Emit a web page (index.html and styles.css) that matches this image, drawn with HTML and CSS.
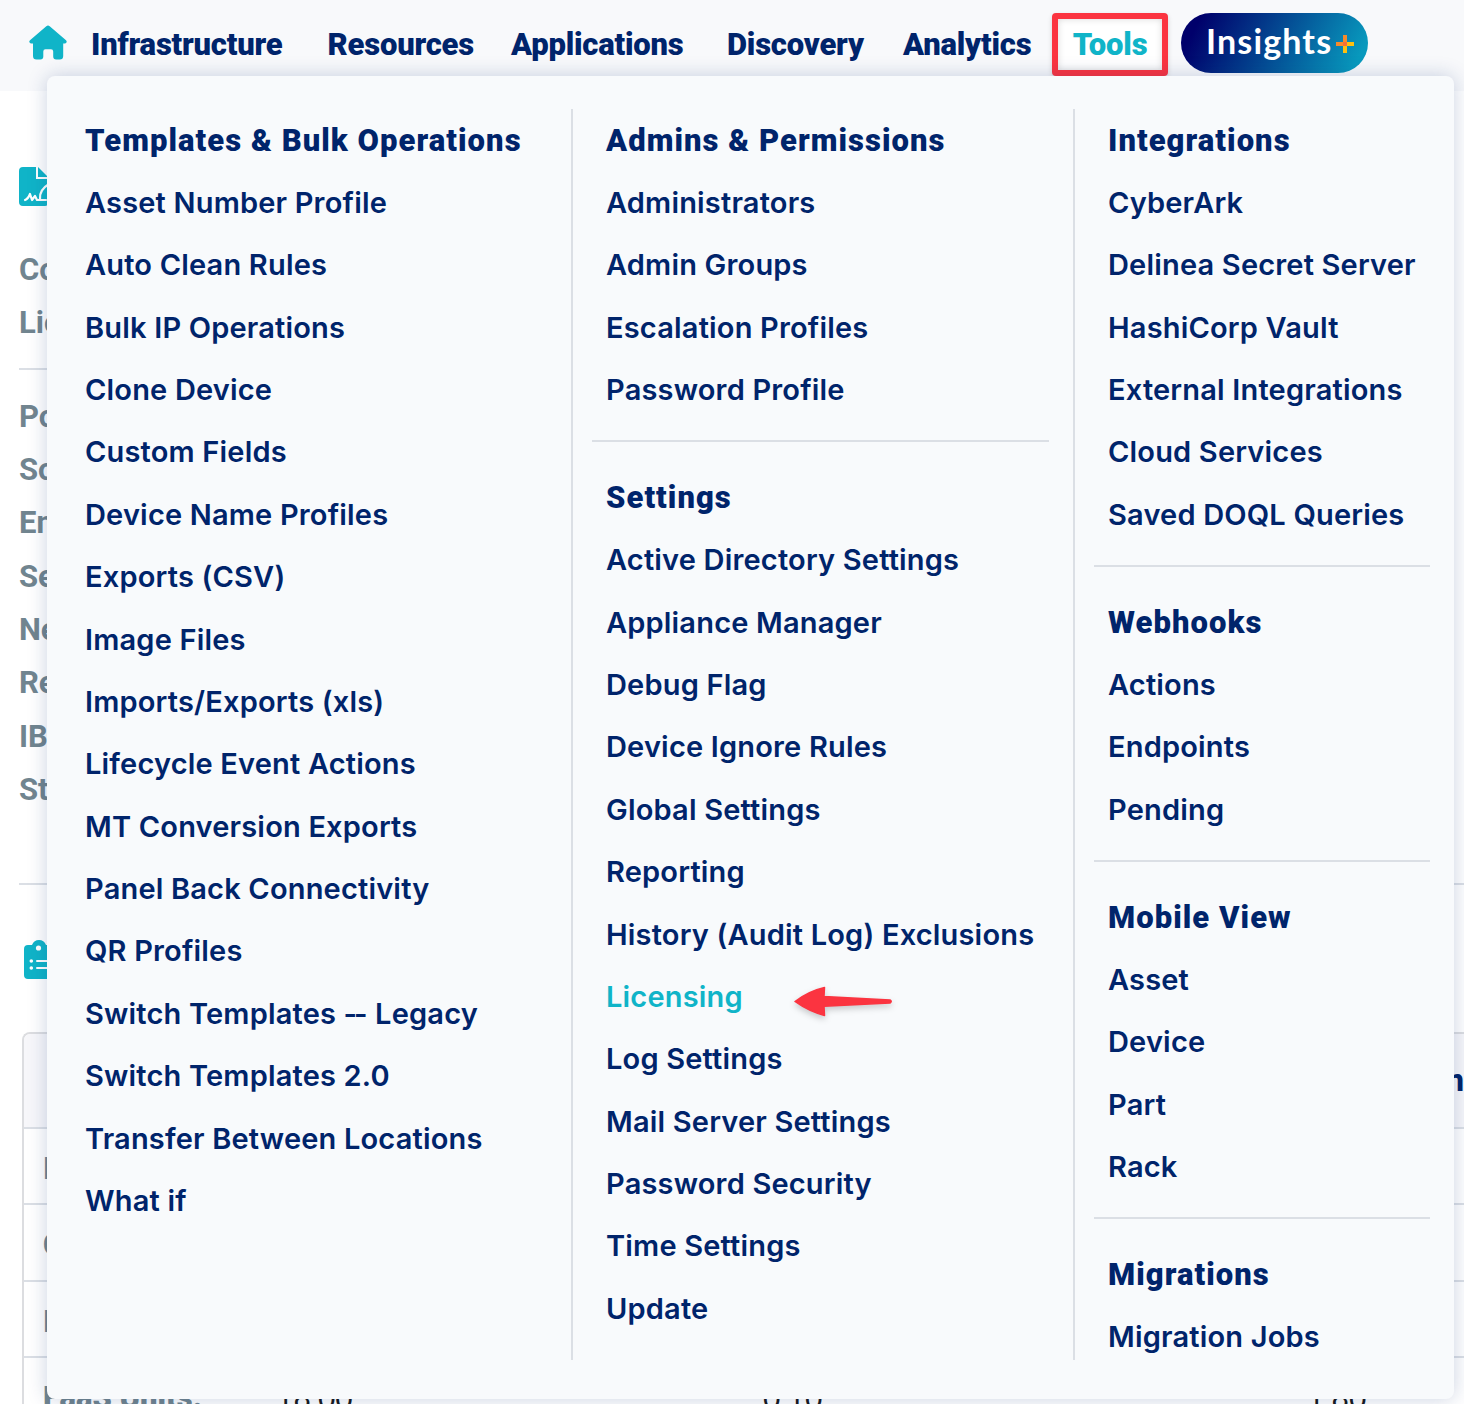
FILE: index.html
```html
<!DOCTYPE html>
<html lang="en">
<head>
<meta charset="utf-8">
<title>Tools menu</title>
<link rel="stylesheet" href="styles.css">
</head>
<body>
<header class="topbar">
  <a class="home" aria-label="Home"><svg width="40" height="36" viewBox="0 0 40 36"><path fill="#10b4c8" d="M18.3 1.3Q20-.2 21.700 1.300L38 15.200Q39.200 16.400 38.300 17.700Q37.900 18.400 36.700 18.400H35.200V31Q35.200 34.500 31.700 34.500H28.200Q25.200 34.500 25.200 31.500V26.500Q25.200 24.300 23 24.300H17.400Q15.300 24.300 15.300 26.500V31.500Q15.300 34.500 12.300 34.500H8.500Q5 34.500 5 31V18.400H3.300Q2.200 18.400 1.600 17.500Q.8 16.300 2 15.200Z"/></svg></a>
  <nav class="nav">
    <a>Infrastructure</a><a>Resources</a><a>Applications</a><a>Discovery</a><a>Analytics</a>
  </nav>
  <a class="tools">Tools</a>
  <a class="insights">Insights<svg class="plus" width="18" height="18" viewBox="0 0 18 18"><path fill="#f58a2b" d="M7 0h4v7h-4v4H0V7h7z"/><path fill="#fdc010" d="M11 7h7v4h-7v7H7v-7h4z"/><path fill="#f36f36" d="M7 7h4v4H7z"/></svg></a>
</header>

<main class="page">
  <section class="summary">
    <svg class="contract-icon" width="40" height="40" viewBox="0 0 40 40"><path fill="#10b4c8" d="M4 0H17V12H29V36Q29 39 26 39H4Q0 39 0 35V4Q0 0 4 0Z"/><path fill="#10b4c8" d="M19 0L29 10H19Z"/><path fill="none" stroke="#fff" stroke-width="2.200" stroke-linecap="round" stroke-linejoin="round" d="M6 33Q9 32 11 27L13 33L16 29L18 33H27M30 17Q20 23 21 32"/></svg>
    <ul class="facts first"><li>Co</li><li>Lic</li></ul>
    <ul class="facts second"><li>Po</li><li>So</li><li>En</li><li>Se</li><li>Ne</li><li>Re</li><li>IB</li><li>St</li></ul>
  </section>
  <svg class="clip-icon" width="32" height="40" viewBox="0 0 32 40"><path fill="#10b4c8" d="M4 5H8Q10 0 15 0Q20 0 22 5H26Q30 5 30 9V35Q30 39 26 39H4Q0 39 0 35V9Q0 5 4 5Z"/><g fill="#fff"><circle cx="14.500" cy="8" r="2.600"/><circle cx="7.300" cy="21" r="1.800"/><circle cx="7.300" cy="28" r="1.800"/><rect x="12" y="20" width="14" height="2" rx="1"/><rect x="12" y="27" width="14" height="2" rx="1"/></g></svg>
  <div class="usage">
    <div class="row head"><span></span><span></span><span></span><span class="remaining">m</span></div>
    <div class="row"><b>I</b></div>
    <div class="row"><b>C</b></div>
    <div class="row"><b>I</b></div>
    <div class="row"><b>FaaS Units:</b><span>18.00</span><span>0.10</span><span>1.80</span></div>
  </div>
</main>

<div class="menu">
  <div class="col">
    <section>
      <h2>Templates &amp; Bulk Operations</h2>
      <a>Asset Number Profile</a><a>Auto Clean Rules</a><a>Bulk IP Operations</a><a>Clone Device</a><a>Custom Fields</a><a>Device Name Profiles</a><a>Exports (CSV)</a><a>Image Files</a><a>Imports/Exports (xls)</a><a>Lifecycle Event Actions</a><a>MT Conversion Exports</a><a>Panel Back Connectivity</a><a>QR Profiles</a><a>Switch Templates <span class="dash">--</span> Legacy</a><a>Switch Templates 2.0</a><a>Transfer Between Locations</a><a>What if</a>
    </section>
  </div>
  <div class="col">
    <section>
      <h2>Admins &amp; Permissions</h2>
      <a>Administrators</a><a>Admin Groups</a><a>Escalation Profiles</a><a>Password Profile</a>
    </section>
    <section>
      <h2>Settings</h2>
      <a>Active Directory Settings</a><a>Appliance Manager</a><a>Debug Flag</a><a>Device Ignore Rules</a><a>Global Settings</a><a>Reporting</a><a>History (Audit Log) Exclusions</a><a class="current">Licensing<svg class="arrow" width="106" height="44" viewBox="0 0 106 44"><path fill="#fb3440" stroke="#fb3440" stroke-width="1.500" stroke-linejoin="round" d="M4 20.500Q18 10 33.500 6.500L33 15.500L99 19Q101.500 20.500 99 22L33 25.200L33.500 34.500Q18 30.500 4 20.500Z"/></svg></a><a>Log Settings</a><a>Mail Server Settings</a><a>Password Security</a><a>Time Settings</a><a>Update</a>
    </section>
  </div>
  <div class="col">
    <section>
      <h2>Integrations</h2>
      <a>CyberArk</a><a>Delinea Secret Server</a><a>HashiCorp Vault</a><a>External Integrations</a><a>Cloud Services</a><a>Saved DOQL Queries</a>
    </section>
    <section>
      <h2>Webhooks</h2>
      <a>Actions</a><a>Endpoints</a><a>Pending</a>
    </section>
    <section>
      <h2>Mobile View</h2>
      <a>Asset</a><a>Device</a><a>Part</a><a>Rack</a>
    </section>
    <section>
      <h2>Migrations</h2>
      <a>Migration Jobs</a>
    </section>
  </div>
</div>
</body>
</html>
```
FILE: styles.css
```css
* { box-sizing: border-box; }

body {
  margin: 0;
  width: 1464px;
  height: 1404px;
  position: relative;
  overflow: hidden;
  background: #fff;
  color: #00246b;
  font-family: Inter, "Liberation Sans", sans-serif;
}

/* Top bar */
.topbar {
  display: flex;
  align-items: flex-start;
  height: 91px;
  background: #f8f9fb;
  font: 900 31px/40px Roboto, sans-serif;
  letter-spacing: -.200px;
}
.home { width: 63px; padding: 25px 0 0 28px; }
.home svg { display: block; }
.nav {
  display: grid;
  grid-template-columns: 236.500px 183.500px 216px 176px 149px;
  padding: 25px 0 0 28px;
}
.tools {
  width: 116px;
  height: 63px;
  margin-top: 13px;
  padding-top: 6px;
  border: 6px solid #fb3440;
  border-radius: 4px;
  background: #fff;
  color: #10b4c8;
  text-align: center;
  box-shadow: 0 2px 5px rgba(0, 0, 0, .15), inset 0 0 7px rgba(0, 0, 0, .15);
}
.insights {
  display: flex;
  width: 187px;
  height: 60px;
  margin: 13px 0 0 13px;
  padding: 8px 0 0 25px;
  border-radius: 30px;
  background: linear-gradient(118deg, #00006b 10%, #0899bd 92%);
  color: #fff;
  font: 700 34px/40px Lato, sans-serif;
  letter-spacing: 1.150px;
}
.plus { margin: 14px 0 0 4px; }

/* Page behind the menu */
.page {
  display: flex;
  flex-direction: column;
  align-items: flex-start;
  color: #71858f;
  font: 700 31px/53.330px Roboto, sans-serif;
}
.summary {
  width: 1445px;
  height: 794px;
  margin-left: 19px;
  padding-top: 76px;
  border-bottom: 2px solid #dbdfe5;
}
.contract-icon { display: block; }
.facts { margin: 0; padding: 0; list-style: none; }
.first { width: 200px; padding: 36px 0 18px; border-bottom: 2px solid #dbdfe5; }
.second { padding-top: 20px; }
.clip-icon { margin: 55px 0 0 24px; }
.usage {
  width: 1442px;
  margin: 52px 0 0 22px;
  border: 2px solid #dcdde0;
  border-right: 0;
  border-radius: 8px 0 0 0;
  overflow: hidden;
}
.row {
  display: grid;
  grid-template-columns: 233px 487px 544px 1fr;
  height: 76.400px;
  padding-left: 19px;
  border-bottom: 2px solid #dbdfe5;
  line-height: 79px;
}
.row span { color: #17191c; font-family: Lato, sans-serif; font-weight: 400; font-size: 30px; }
.head { height: 94.800px; background: #f7f7fa; line-height: 93px; }
.head .remaining { text-align: right; color: #00246b; font: 800 31px/93px Roboto, sans-serif; }

/* Menu panel */
.menu {
  position: absolute;
  left: 47px;
  top: 76px;
  width: 1407px;
  height: 1323px;
  padding: 33px 24px 38px 0;
  display: grid;
  grid-template-columns: 526px 502px 1fr;
  border-radius: 8px;
  background: #f8fafc;
  box-shadow: 0 0 20px rgba(20, 50, 120, .22);
}
.col { height: 1251px; border-right: 2px solid #dbdfe5; padding-left: 19px; padding-right: 24px; }
.col:first-child { padding-right: 0; }
.col:last-child { border: 0; padding-right: 0; }
.col section { padding: 0 0 19px 14px; }
.col:first-child section { padding-left: 19px; }
.col section + section { padding-top: 24px; border-top: 2px solid #dbdfe5; }
.menu h2 {
  height: 62.800px;
  margin: 0;
  font: 900 31px/64.800px Roboto, sans-serif;
  letter-spacing: 1.050px;
  white-space: nowrap;
}
.menu a {
  display: block;
  height: 62.400px;
  font-weight: 600;
  font-size: 29px;
  line-height: 62px;
  letter-spacing: .180px;
  white-space: nowrap;
}
.dash { letter-spacing: -3px; margin-right: 3px; }
.menu .current { position: relative; color: #10b4c8; }
.arrow {
  position: absolute;
  left: 185px;
  top: 15px;
  filter: drop-shadow(0 3px 3px rgba(0, 0, 0, .2));
}
```
